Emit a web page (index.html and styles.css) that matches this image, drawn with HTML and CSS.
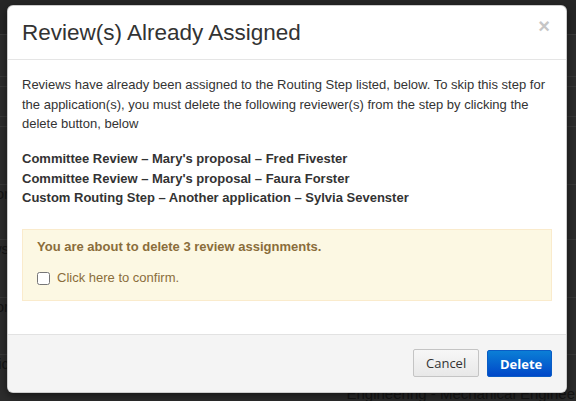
FILE: index.html
```html
<!DOCTYPE html>
<html>
<head>
<meta charset="utf-8">
<link rel="stylesheet" href="styles.css">
</head>
<body>
<div class="page">
  <div class="topbar"></div>
  <div class="row h42"></div>
  <div class="row h10"></div>
  <div class="row h30"></div>
  <div class="row h10"></div>
  <div class="row h58"></div>
  <div class="row h55"><span class="cut">Sensor</span></div>
  <div class="row h58"><span class="cut">Reviews</span></div>
  <div class="row h57"><span class="cut">Monitor</span></div>
  <div class="row last"><span class="cut">Logic</span><span class="dept">Engineering - Mechanical Engineering</span></div>
</div>

<div class="modal">
  <div class="modal-header">
    <h4 class="modal-title">Review(s) Already Assigned</h4>
    <span class="close">×</span>
  </div>
  <div class="modal-body">
    <p class="intro">Reviews have already been assigned to the Routing Step listed, below. To skip this step for the application(s), you must delete the following reviewer(s) from the step by clicking the delete button, below</p>
    <p class="list">Committee Review – Mary's proposal – Fred Fivester<br>Committee Review – Mary's proposal – Faura Forster<br>Custom Routing Step – Another application – Sylvia Sevenster</p>
    <div class="alert">
      <div class="alert-title">You are about to delete 3 review assignments.</div>
      <label class="confirm"><input type="checkbox"><span>Click here to confirm.</span></label>
    </div>
  </div>
  <div class="modal-footer">
    <button class="btn btn-cancel">Cancel</button>
    <button class="btn btn-delete">Delete</button>
  </div>
</div>
</body>
</html>
```
FILE: styles.css
```css
html, body {
  margin: 0;
  padding: 0;
}
body {
  width: 576px;
  height: 401px;
  overflow: hidden;
  background: #2c2c2c;
  font-family: "Liberation Sans", Arial, sans-serif;
  position: relative;
}
.page {
  display: flex;
  flex-direction: column;
}
.topbar {
  height: 35px;
  background: #262626;
  border-bottom: 1px solid #3a3a3a;
  box-sizing: border-box;
}
.row {
  border-bottom: 1px solid #383838;
  box-sizing: border-box;
  display: flex;
  align-items: flex-start;
  font-size: 15px;
  color: #151515;
}
.h42 { height: 42px; }
.h10 { height: 10px; }
.h30 { height: 30px; }
.h58 { height: 58px; }
.h55 { height: 55px; }
.h57 { height: 57px; }
.last { height: 46px; border-bottom: none; }
.cut {
  width: 9px;
  overflow: hidden;
  white-space: nowrap;
  direction: rtl;
  line-height: 17px;
}
.dept {
  margin-left: auto;
  margin-top: 30px;
  margin-right: -24px;
  white-space: nowrap;
  font-size: 15px;
  line-height: 17px;
}

.modal {
  position: absolute;
  left: 7px;
  top: 5px;
  width: 560px;
  box-sizing: border-box;
  background: #fff;
  border-radius: 6px;
  border: 1px solid rgba(0,0,0,0.2);
  box-shadow: 0 3px 9px rgba(0,0,0,0.5);
  overflow: hidden;
  color: #333;
}
.modal-header {
  display: flex;
  align-items: flex-start;
  padding: 15px 15px 15px 14px;
  border-bottom: 1px solid #e5e5e5;
}
.modal-title {
  flex: 1;
  margin: 0;
  font-weight: normal;
  font-size: 22.5px;
  line-height: 23px;
  color: #333;
}
.close {
  font-size: 20px;
  font-weight: bold;
  line-height: 20px;
  color: #c6c6c6;
  margin-top: -5px;
  margin-right: 1px;
}
.modal-body {
  padding: 15px 14px 33px 14px;
  font-size: 13px;
  line-height: 19.5px;
}
.modal-body p {
  margin: 0;
}
.intro {
  margin-bottom: 15.5px !important;
}
.list {
  font-weight: bold;
}
.alert {
  margin-top: 21.5px;
  background: #fcf8e3;
  border: 1px solid #faebcc;
  color: #8a6d3b;
  padding: 7px 14px 12px 14px;
}
.alert-title {
  font-weight: bold;
  line-height: 20px;
  margin-bottom: 11px;
}
.confirm {
  display: flex;
  align-items: center;
  height: 20px;
  gap: 7px;
}
.confirm input {
  margin: 0;
  width: 13px;
  height: 13px;
}
.modal-footer {
  background: #f4f4f4;
  border-top: 1px solid #e2e2e2;
  padding: 14px 14px 15px 14px;
  display: flex;
  justify-content: flex-end;
  gap: 8px;
}
.btn {
  height: 28px;
  box-sizing: border-box;
  font-family: "Open Sans", "Liberation Sans", sans-serif;
  font-size: 13px;
  padding: 0 12px;
  border-radius: 2px;
  cursor: pointer;
}
.btn-cancel {
  width: 66px;
  background: linear-gradient(#f7f7f7, #e8e8e8);
  border: 1px solid #c4c4c4;
  color: #333;
}
.btn-delete {
  width: 65px;
  margin-top: 1px;
  height: 27px;
  background: linear-gradient(#0b7fd6, #0047c8);
  border: 1px solid #0a5cc5;
  color: #fff;
  font-weight: bold;
}
```
